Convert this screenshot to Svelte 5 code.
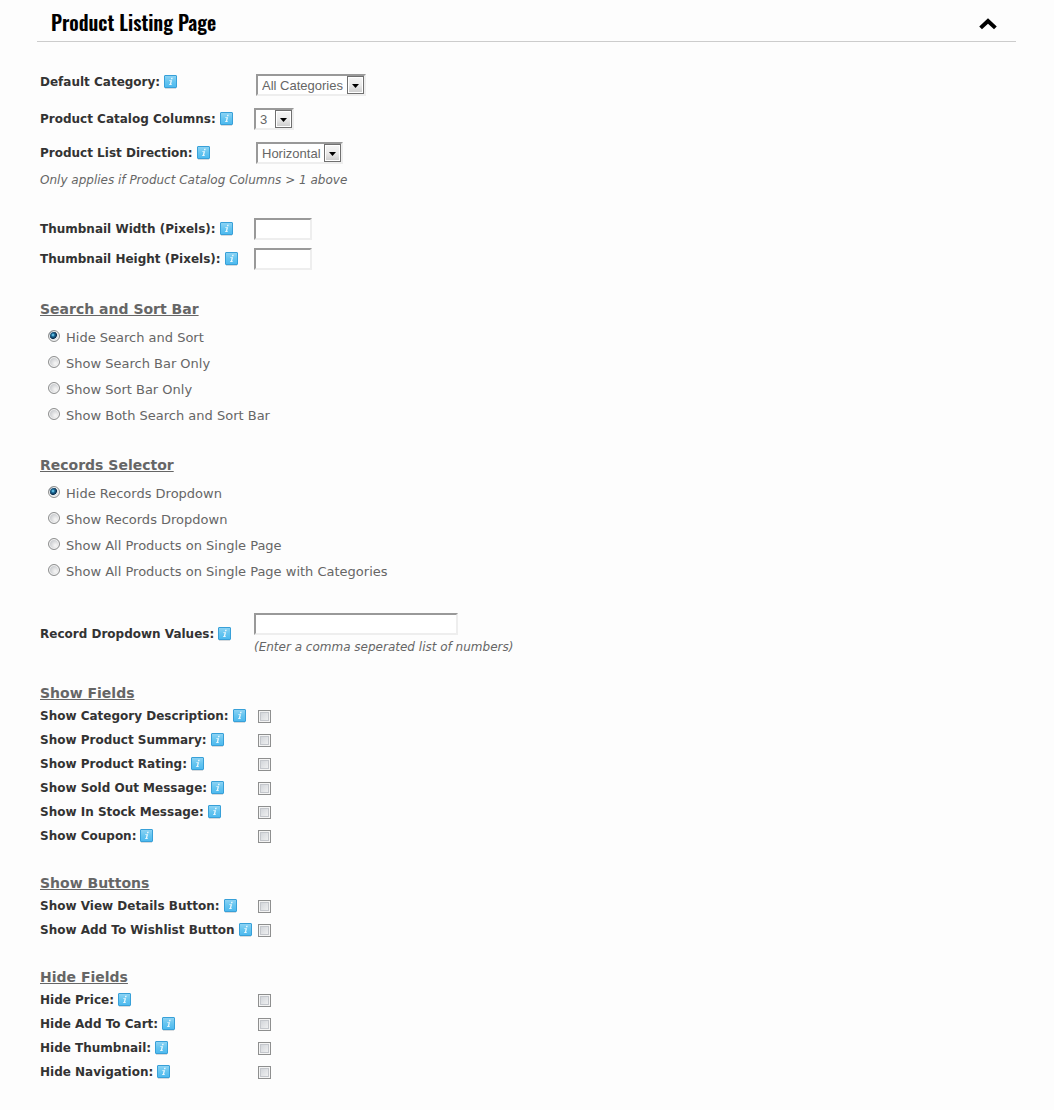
<script>
  let open = true;
  let searchSort = "hide";
  let records = "hide";
  let recordValues = "";

  const dropdowns = [
    {
      id: "defaultCategory",
      label: "Default Category:",
      value: "All Categories",
      size: "wide",
    },
    {
      id: "catalogColumns",
      label: "Product Catalog Columns:",
      value: "3",
      size: "small",
    },
    {
      id: "listDirection",
      label: "Product List Direction:",
      value: "Horizontal",
      size: "medium",
    },
  ];

  const thumbnails = [
    { id: "thumbWidth", label: "Thumbnail Width (Pixels):", value: "" },
    { id: "thumbHeight", label: "Thumbnail Height (Pixels):", value: "" },
  ];

  const searchOptions = [
    { value: "hide", label: "Hide Search and Sort" },
    { value: "search", label: "Show Search Bar Only" },
    { value: "sort", label: "Show Sort Bar Only" },
    { value: "both", label: "Show Both Search and Sort Bar" },
  ];

  const recordOptions = [
    { value: "hide", label: "Hide Records Dropdown" },
    { value: "show", label: "Show Records Dropdown" },
    { value: "single", label: "Show All Products on Single Page" },
    {
      value: "singleCategories",
      label: "Show All Products on Single Page with Categories",
    },
  ];

  const checkGroups = [
    {
      title: "Show Fields",
      items: [
        { id: "showDescription", label: "Show Category Description:", checked: false },
        { id: "showSummary", label: "Show Product Summary:", checked: false },
        { id: "showRating", label: "Show Product Rating:", checked: false },
        { id: "showSoldOut", label: "Show Sold Out Message:", checked: false },
        { id: "showInStock", label: "Show In Stock Message:", checked: false },
        { id: "showCoupon", label: "Show Coupon:", checked: false },
      ],
    },
    {
      title: "Show Buttons",
      items: [
        { id: "showDetails", label: "Show View Details Button:", checked: false },
        { id: "showWishlist", label: "Show Add To Wishlist Button", checked: false },
      ],
    },
    {
      title: "Hide Fields",
      items: [
        { id: "hidePrice", label: "Hide Price:", checked: false },
        { id: "hideCart", label: "Hide Add To Cart:", checked: false },
        { id: "hideThumbnail", label: "Hide Thumbnail:", checked: false },
        { id: "hideNavigation", label: "Hide Navigation:", checked: false },
      ],
    },
  ];

  const toggle = () => {
    open = !open;
  };
</script>

{#snippet fieldLabel(id, text)}
  <div class="name">
    <label for={id}>{text}</label>
    <button type="button" class="info" aria-label="Help">
      <svg width="13" height="15" viewBox="0 0 13 15">
        <defs>
          <linearGradient id="info-fill" x1="0" y1="0" x2="0" y2="1">
            <stop offset="0" stop-color="#8fd4f4" />
            <stop offset="0.5" stop-color="#66c5f0" />
            <stop offset="1" stop-color="#4cb9ef" />
          </linearGradient>
        </defs>
        <path d="M1 13.5h11" stroke="#d5dade" />
        <rect x="0.5" y="0.5" width="12" height="12" rx="0.5" fill="url(#info-fill)" stroke="#38a0d8" />
        <path d="M7.2 2.8h1.5l-.3 1.4H6.9zM5.4 5.2h2.7L7.1 9.2h.9l-.2.9H4.9l.2-.9h.7l.7-3.1h-1.3z" fill="#e9f7fd" />
      </svg>
    </button>
  </div>
{/snippet}

<section class="panel">
  <header>
    <h1>Product Listing Page</h1>
    <button type="button" class="toggle" aria-label="Toggle section" on:click={toggle}>
      <svg width="18" height="12" viewBox="0 0 18 12">
        <path d="M1.6 9.9 9 3l7.4 6.9" fill="none" stroke="#000" stroke-width="4" />
      </svg>
    </button>
  </header>

  {#if open}
    <form>
      <div class="group dropdowns">
        {#each dropdowns as field}
          <div class="row">
            {@render fieldLabel(field.id, field.label)}
            <div class="select {field.size}">
              <select id={field.id} bind:value={field.value}>
                <option>{field.value}</option>
              </select>
              <svg width="17" height="18" viewBox="0 0 17 18">
                <defs>
                  <linearGradient id="arrow-fill" x1="0" y1="0" x2="0" y2="1">
                    <stop offset="0" stop-color="#f4f4f4" />
                    <stop offset="0.5" stop-color="#ebebeb" />
                    <stop offset="1" stop-color="#cfcfcf" />
                  </linearGradient>
                </defs>
                <rect x="0.5" y="0.5" width="16" height="17" fill="#fff" stroke="#707070" />
                <rect x="2" y="2" width="13" height="14" fill="url(#arrow-fill)" />
                <path d="M5 8h7l-3.5 4z" fill="#000" />
              </svg>
            </div>
          </div>
        {/each}
        <p class="note">Only applies if Product Catalog Columns &gt; 1 above</p>
      </div>

      <div class="group thumbnails">
        {#each thumbnails as field}
          <div class="row">
            {@render fieldLabel(field.id, field.label)}
            <input type="text" class="text short" id={field.id} bind:value={field.value} />
          </div>
        {/each}
      </div>

      <div class="group choices" role="radiogroup" aria-labelledby="searchTitle">
        <h2 id="searchTitle">Search and Sort Bar</h2>
        {#each searchOptions as option}
          <label class="choice">
            <input type="radio" name="searchSort" value={option.value} bind:group={searchSort} />
            {option.label}
          </label>
        {/each}
      </div>

      <div class="group choices" role="radiogroup" aria-labelledby="recordsTitle">
        <h2 id="recordsTitle">Records Selector</h2>
        {#each recordOptions as option}
          <label class="choice">
            <input type="radio" name="records" value={option.value} bind:group={records} />
            {option.label}
          </label>
        {/each}
      </div>

      <div class="group row values">
        {@render fieldLabel("recordValues", "Record Dropdown Values:")}
        <div>
          <input type="text" class="text long" id="recordValues" bind:value={recordValues} />
          <p class="note">(Enter a comma seperated list of numbers)</p>
        </div>
      </div>

      {#each checkGroups as group}
        <div class="group checks">
          <h2>{group.title}</h2>
          {#each group.items as item}
            <div class="row">
              {@render fieldLabel(item.id, item.label)}
              <input type="checkbox" id={item.id} bind:checked={item.checked} />
            </div>
          {/each}
        </div>
      {/each}
    </form>
  {/if}
</section>

<style>
  :global(body) {
    background: #fdfdfd;
  }

  .panel {
    padding: 0 38px 4px 37px;
    color: #666;
    font-family: Verdana, "DejaVu Sans", sans-serif;
    font-size: 13px;
    line-height: 16px;
  }

  header {
    display: flex;
    align-items: center;
    justify-content: space-between;
    height: 41px;
    padding: 0 19px 0 14px;
    border-bottom: 1px solid #ccc;
  }

  h1 {
    margin: 0;
    padding-top: 2px;
    color: #000;
    font-family: Oswald, "Liberation Sans Narrow", "Open Sans Condensed", sans-serif;
    font-size: 20px;
    font-weight: 600;
    line-height: 30px;
  }

  button {
    display: block;
    padding: 0;
    border: 0;
    background: none;
    cursor: pointer;
  }

  button svg {
    display: block;
  }

  .toggle {
    padding-top: 6px;
  }

  form {
    padding: 32px 3px 0;
  }

  .group {
    margin-bottom: 28px;
  }

  .row {
    display: grid;
    grid-template-columns: 214px 1fr;
    align-items: center;
  }

  .name {
    display: flex;
    align-items: center;
    gap: 4px;
    color: #333;
    font-size: 12px;
    font-weight: bold;
    white-space: nowrap;
  }

  .dropdowns {
    margin-bottom: 30px;
  }

  .dropdowns .row {
    height: 22px;
    margin-bottom: 12px;
  }

  .dropdowns .row:first-child {
    align-items: start;
  }

  .dropdowns .note {
    margin-top: -4px;
  }

  .select {
    display: grid;
    align-items: center;
    justify-self: start;
    box-sizing: border-box;
    height: 22px;
    margin-left: 2px;
    border: 2px solid;
    border-color: #999 #eee #eee #999;
    background: #fff;
  }

  .select.wide {
    width: 110px;
  }

  .select.medium {
    width: 87px;
  }

  .select.small {
    width: 40px;
    margin-left: 0;
  }

  .select select,
  .select svg {
    grid-area: 1 / 1;
  }

  .select svg {
    justify-self: end;
    pointer-events: none;
  }

  select {
    width: 100%;
    height: 18px;
    padding: 0 18px 0 4px;
    border: 0;
    appearance: none;
    background: none;
    color: #666;
    font-family: Arial, "Liberation Sans", sans-serif;
    font-size: 13px;
  }

  .note {
    margin: 0;
    font-size: 12px;
    font-style: italic;
  }

  .thumbnails .row {
    margin-bottom: 8px;
  }

  .text {
    display: block;
    box-sizing: border-box;
    height: 22px;
    padding: 0 2px;
    border: 2px solid;
    border-color: #999 #eee #eee #999;
    background: #fff;
    color: #666;
    font-size: 13px;
  }

  .short {
    width: 58px;
  }

  .long {
    width: 204px;
    margin-bottom: 4px;
  }

  h2 {
    margin: 0;
    font-size: 14px;
    line-height: 22px;
    text-decoration: underline;
  }

  .choices {
    margin-bottom: 25px;
  }

  .choices h2 {
    margin-bottom: 5px;
  }

  .choice {
    display: flex;
    align-items: center;
    gap: 6px;
    height: 26px;
    padding-left: 8px;
  }

  .values {
    margin: 28px 0 27px;
  }

  input[type="radio"] {
    appearance: none;
    box-sizing: border-box;
    width: 12px;
    height: 12px;
    margin: 0 0 4px;
    border: 1px solid #8e8f8f;
    border-radius: 50%;
    background: radial-gradient(circle at 65% 65%, #f2f2f2 10%, #cdcfd2 60%);
    box-shadow: inset 0 0 0 1px #f4f4f4;
  }

  input[type="radio"]:checked {
    background: radial-gradient(circle at 40% 40%, #6ccbf0 5%, #1c6a96 20%, #0b2f4f 42%, #dfe3e6 50%);
  }

  input[type="checkbox"] {
    appearance: none;
    box-sizing: border-box;
    width: 13px;
    height: 13px;
    margin: 0 4px;
    border: 1px solid #8e8f8f;
    background: linear-gradient(135deg, #cbcfd5, #f6f6f6);
    box-shadow:
      inset 0 0 0 1px #f4f4f4,
      inset 0 0 0 2px #c4c7cc;
  }

  .checks {
    margin-bottom: 24px;
  }

  .checks .row {
    height: 24px;
  }
</style>
